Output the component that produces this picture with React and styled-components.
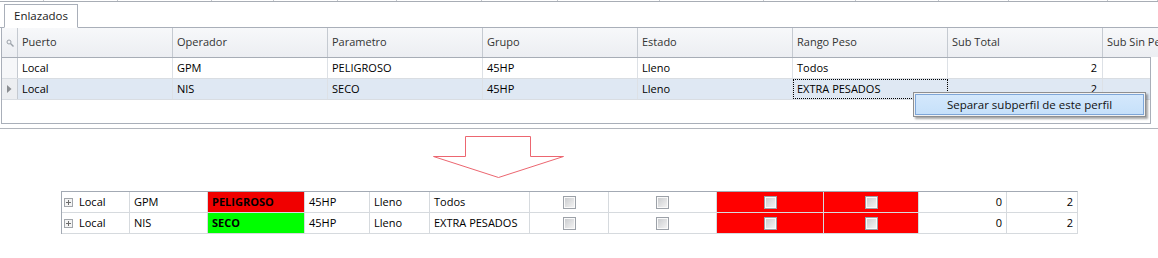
import styled, { createGlobalStyle } from "styled-components";

const GlobalStyle = createGlobalStyle`
  body {
    margin: 0;
    background: #fff;
    font-family: "Open Sans", "Noto Sans", sans-serif;
    font-size: 11px;
    color: #000;
  }
`;

const Page = styled.div`
  position: relative;
  width: 1158px;
  height: 258px;
  overflow: hidden;
`;

const TopStrip = styled.div`
  display: flex;
  height: 1px;
  border-bottom: 1px solid #a8adb5;
`;

const Tick = styled.div`
  flex: 0 0 ${(p) => p.w}px;
  box-sizing: border-box;
  border-right: 1px solid #c4c8ce;
`;

const Panel = styled.div`
  border-bottom: 1px solid #b1b5bc;
  padding-bottom: 4px;
`;

const TabStrip = styled.div`
  display: flex;
  margin-top: 1px;
  padding: 1px 0 0 4px;
  border-bottom: 1px solid #a9afb9;
`;

const Tab = styled.div`
  box-sizing: border-box;
  width: 74px;
  height: 24px;
  margin-bottom: -1px;
  padding-bottom: 2px;
  border: 1px solid #a9afb9;
  border-bottom: 1px solid #fff;
  background: #fff;
  display: flex;
  align-items: center;
  justify-content: center;
  font-size: 11.5px;
  color: #1b1b1b;
`;

const Grid = styled.div`
  margin-left: 1px;
  width: 1150px;
  box-sizing: border-box;
  border-left: 1px solid #a9afb9;
  border-right: 1px solid #a9afb9;
  border-bottom: 1px solid #a9afb9;
  height: 96px;
`;

const Row = styled.div`
  display: flex;
  height: ${(p) => p.h}px;
  box-sizing: border-box;
  border-bottom: 1px solid ${(p) => p.line};
  background: ${(p) => p.bg || "#fff"};
`;

const HeadCell = styled.div`
  flex: 0 0 ${(p) => p.w}px;
  box-sizing: border-box;
  border-right: 1px solid #c5cad1;
  background: linear-gradient(#f7f8fa, #eceef2);
  display: flex;
  align-items: center;
  justify-content: ${(p) => (p.center ? "center" : "flex-start")};
  padding: ${(p) => (p.center ? "0" : "0 0 2px 4px")};
  color: #333;
  white-space: nowrap;
  overflow: hidden;
`;

const Cell = styled.div`
  flex: 0 0 ${(p) => p.w}px;
  box-sizing: border-box;
  border-right: 1px solid #dde1e6;
  display: flex;
  align-items: center;
  justify-content: ${(p) => (p.right ? "flex-end" : p.center ? "center" : "flex-start")};
  padding: ${(p) => (p.right ? "0 5px 2px 0" : p.center ? "0" : "0 0 2px 4px")};
  white-space: nowrap;
  overflow: hidden;
  outline: ${(p) => (p.focused ? "1px dotted #000" : "none")};
  outline-offset: -1px;
`;

const Indicator = styled(Cell)`
  background: ${(p) => (p.active ? "#eceef1" : "#f6f7f9")};
  border-right: 1px solid #c5cad1;
`;

const Menu = styled.div`
  position: absolute;
  left: 913px;
  top: 92px;
  width: 233px;
  height: 25px;
  box-sizing: border-box;
  border: 1px solid #8e8f91;
  background: #f2f2f2;
  padding: 1px;
  box-shadow: 2px 2px 2px rgba(0, 0, 0, 0.35);
`;

const MenuItem = styled.div`
  height: 100%;
  box-sizing: border-box;
  border: 1px solid #7ea6d8;
  background: linear-gradient(#d4e8fc, #c6e0fa);
  display: flex;
  align-items: center;
  justify-content: center;
  padding-bottom: 1px;
  font-size: 11.5px;
  color: #111;
`;

const ArrowArea = styled.div`
  height: 62px;
  box-sizing: border-box;
  padding: 6px 0 0 432px;
`;

const Table = styled.div`
  margin-left: 61px;
  width: 1017px;
  box-sizing: border-box;
  border-left: 1px solid #a3aab4;
  border-top: 1px solid #a3aab4;
  border-right: 1px solid #d6dade;
`;

const TRow = styled.div`
  display: flex;
  height: 21px;
  box-sizing: border-box;
  border-bottom: 1px solid #d6dade;
`;

const TCell = styled.div`
  flex: 0 0 ${(p) => p.w}px;
  box-sizing: border-box;
  border-right: ${(p) => (p.last ? "none" : "1px solid #d6dade")};
  background: ${(p) => p.bg || "#fff"};
  font-weight: ${(p) => (p.bold ? 700 : 400)};
  display: flex;
  align-items: center;
  gap: 6px;
  justify-content: ${(p) => (p.right ? "flex-end" : p.center ? "center" : "flex-start")};
  padding: ${(p) => (p.right ? "0 4px 2px 0" : p.center ? "0" : "0 0 2px 4px")};
  white-space: nowrap;
`;

const Expander = styled.span`
  width: 9px;
  height: 9px;
  box-sizing: border-box;
  border: 1px solid #a2a6ab;
  background: #f4f4f4;
  position: relative;
  margin: 2px 0 0 -2px;
  &::before,
  &::after {
    content: "";
    position: absolute;
    background: #6d6d6d;
  }
  &::before {
    left: 1px;
    right: 1px;
    top: 3px;
    height: 1px;
  }
  &::after {
    top: 1px;
    bottom: 1px;
    left: 3px;
    width: 1px;
  }
`;

const Check = styled.span`
  width: 13px;
  height: 13px;
  box-sizing: border-box;
  border: 1px solid #9ca1a8;
  background: #fafafa;
  padding: 1px;
  &::before {
    content: "";
    display: block;
    width: 100%;
    height: 100%;
    background: linear-gradient(135deg, #cbcdd0, #f2f2f2);
  }
`;

const ticks = [44, 74, 94, 62, 64, 59, 85, 76, 102, 104, 92, 83, 70, 99, 50];

const cols = [
  "Puerto",
  "Operador",
  "Parametro",
  "Grupo",
  "Estado",
  "Rango Peso",
  "Sub Total",
  "Sub Sin Peso",
];

const rows = [
  ["Local", "GPM", "PELIGROSO", "45HP", "Lleno", "Todos", "2", ""],
  ["Local", "NIS", "SECO", "45HP", "Lleno", "EXTRA PESADOS", "2", ""],
];

const bottomWidths = [68, 78, 97, 65, 60, 100, 79, 108, 107, 95, 88, 70];

const bottomRows = [
  { puerto: "Local", op: "GPM", param: "PELIGROSO", color: "#f00000", rango: "Todos" },
  { puerto: "Local", op: "NIS", param: "SECO", color: "#00ff00", rango: "EXTRA PESADOS" },
];

const Magnifier = () => (
  <svg width="8" height="8" viewBox="0 0 8 8">
    <circle cx="3" cy="3" r="2" fill="none" stroke="#9aa0a8" strokeWidth="1" />
    <path d="M4.5 4.5 L7.5 7.5" stroke="#9aa0a8" strokeWidth="1.4" />
  </svg>
);

const RowMarker = () => (
  <svg width="5" height="8" viewBox="0 0 5 8">
    <path d="M0 0 L4.5 4 L0 8 Z" fill="#8a8d91" />
  </svg>
);

const DownArrow = () => (
  <svg width="133" height="44" viewBox="0 0 133 44">
    <path
      d="M33.5 1.5 H98.5 V21.5 H131.5 L66.5 42.5 L1.5 21.5 H33.5 Z"
      fill="#fff"
      stroke="#ec6670"
      strokeWidth="1"
    />
  </svg>
);

export default function App() {
  return (
    <Page>
      <GlobalStyle />
      <TopStrip>
        {ticks.map((w, i) => (
          <Tick key={i} w={w} />
        ))}
      </TopStrip>
      <Panel>
        <TabStrip>
          <Tab>Enlazados</Tab>
        </TabStrip>
        <Grid>
          <Row h={30} line="#a7adb6">
            <HeadCell w={16} center>
              <Magnifier />
            </HeadCell>
            {cols.map((c) => (
              <HeadCell key={c} w={155}>
                {c}
              </HeadCell>
            ))}
          </Row>
          {rows.map((r, i) => (
            <Row key={i} h={21} line="#d9dde2" bg={i === 1 ? "#dfe8f3" : "#fff"}>
              <Indicator w={16} center active={i === 1}>
                {i === 1 && <RowMarker />}
              </Indicator>
              {r.map((v, j) => (
                <Cell key={j} w={155} right={j === 6} focused={i === 1 && j === 5}>
                  {v}
                </Cell>
              ))}
            </Row>
          ))}
        </Grid>
      </Panel>
      <ArrowArea>
        <DownArrow />
      </ArrowArea>
      <Table>
        {bottomRows.map((r, i) => (
          <TRow key={i}>
            <TCell w={bottomWidths[0]}>
              <Expander />
              {r.puerto}
            </TCell>
            <TCell w={bottomWidths[1]}>{r.op}</TCell>
            <TCell w={bottomWidths[2]} bg={r.color} bold>
              {r.param}
            </TCell>
            <TCell w={bottomWidths[3]}>45HP</TCell>
            <TCell w={bottomWidths[4]}>Lleno</TCell>
            <TCell w={bottomWidths[5]}>{r.rango}</TCell>
            <TCell w={bottomWidths[6]} center>
              <Check />
            </TCell>
            <TCell w={bottomWidths[7]} center>
              <Check />
            </TCell>
            <TCell w={bottomWidths[8]} center bg="#ff0000">
              <Check />
            </TCell>
            <TCell w={bottomWidths[9]} center bg="#ff0000">
              <Check />
            </TCell>
            <TCell w={bottomWidths[10]} right>
              0
            </TCell>
            <TCell w={bottomWidths[11]} right last>
              2
            </TCell>
          </TRow>
        ))}
      </Table>
      <Menu>
        <MenuItem>Separar subperfil de este perfil</MenuItem>
      </Menu>
    </Page>
  );
}
